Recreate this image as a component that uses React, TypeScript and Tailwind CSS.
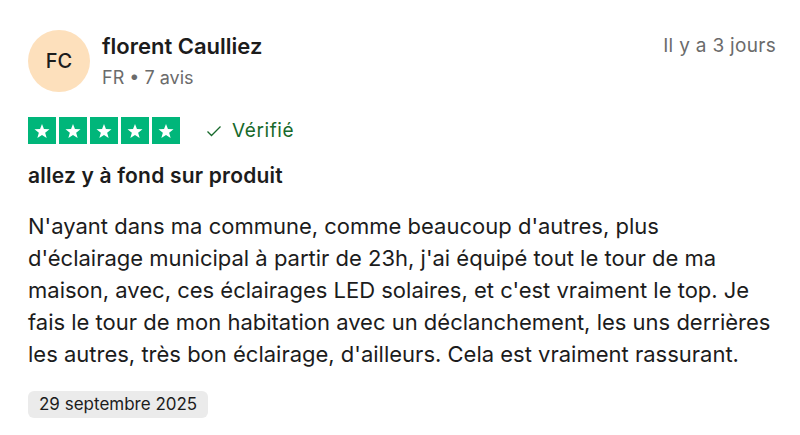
import React from "react";

const font = { fontFamily: "Inter, 'Liberation Sans', sans-serif" };

function Star() {
  return (
    <div className="w-[28px] h-[27px] bg-[#00b67a] flex items-center justify-center">
      <svg viewBox="0 0 24 24" className="w-[18px] h-[18px]" fill="#fff">
        <path d="M12 2.5l2.6 6.9 7.4.3-5.8 4.6 2 7.1L12 17.3l-6.2 4.1 2-7.1L2 9.7l7.4-.3z" />
      </svg>
    </div>
  );
}

export default function App() {
  const lines = [
    "N'ayant dans ma commune, comme beaucoup d'autres, plus",
    "d'éclairage municipal à partir de 23h, j'ai équipé tout le tour de ma",
    "maison, avec, ces éclairages LED solaires, et c'est vraiment le top. Je",
    "fais le tour de mon habitation avec un déclanchement, les uns derrières",
    "les autres, très bon éclairage, d'ailleurs. Cela est vraiment rassurant.",
  ];

  return (
    <div className="w-[800px] h-[435px] bg-white px-[28px] pt-[30px] text-[#1c1c1c]" style={font}>
      {/* Header */}
      <div className="flex items-start">
        <div className="w-[62px] h-[62px] rounded-full bg-[#fde0bc] flex items-center justify-center text-[20px] font-medium text-[#1c1c1c] shrink-0">
          FC
        </div>
        <div className="ml-[12px] flex flex-col">
          <span className="text-[22px] font-semibold leading-[28px] mt-[2px]">florent Caulliez</span>
          <span className="text-[18px] text-[#6b6b6b] leading-[24px] mt-[6px]">FR • 7 avis</span>
        </div>
        <span className="ml-auto text-[19px] tracking-[0.3px] text-[#6b6b6b] leading-[24px] mt-[4px] mr-[-4px]">
          Il y a 3 jours
        </span>
      </div>

      {/* Rating */}
      <div className="flex items-center mt-[25px]">
        <div className="flex gap-[3px]">
          <Star />
          <Star />
          <Star />
          <Star />
          <Star />
        </div>
        <div className="flex items-center ml-[26px] text-[#17692b]">
          <svg viewBox="0 0 16 16" className="w-[16px] h-[16px]" fill="none" stroke="currentColor" strokeWidth={1.3}>
            <path d="M1.5 8.5l4 4L14.5 3.5" />
          </svg>
          <span className="ml-[10px] text-[19px] tracking-[0.6px] leading-[24px]">Vérifié</span>
        </div>
      </div>

      <h2 className="mt-[19px] text-[21px] tracking-[0.2px] font-semibold leading-[26px]">allez y à fond sur produit</h2>

      <p className="mt-[21px] text-[22px] leading-[32px] text-[#1c1c1c]">
        {lines.map((l, i) => (
          <React.Fragment key={i}>
            {l}
            {i < lines.length - 1 && <br />}
          </React.Fragment>
        ))}
      </p>

      <div className="mt-[21px] inline-flex items-center rounded-[6px] bg-[#ebebeb] px-[11px] h-[27px] text-[17px] text-[#1c1c1c]">
        29 septembre 2025
      </div>
    </div>
  );
}
